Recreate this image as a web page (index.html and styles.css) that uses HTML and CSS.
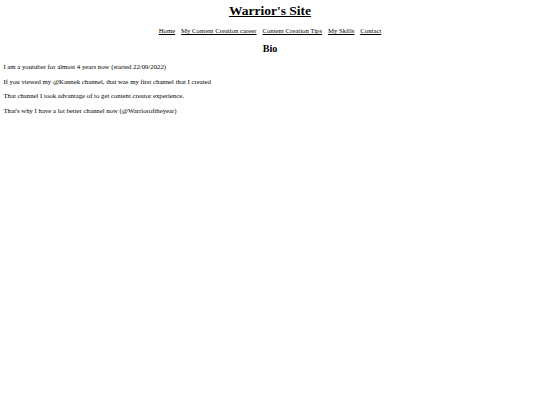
FILE: index.html
```html
<!DOCTYPE html>
<html>
<head>
<meta charset="utf-8">
<title>Warrior's Site</title>
<link rel="stylesheet" href="styles.css">
</head>
<body>
<header class="site-header">
  <h1 class="title"><u>Warrior's Site</u></h1>
  <nav class="nav">
    <a href="#">Home</a>
    <a href="#">My Content Creation career</a>
    <a href="#">Content Creation Tips</a>
    <a href="#">My Skills</a>
    <a href="#">Contact</a>
  </nav>
</header>
<main>
  <h2 class="section-title">Bio</h2>
  <p>I am a youtuber for almost 4 years now (started 22/09/2022)</p>
  <p>If you viewed my @Kannek channel, that was my first channel that I created</p>
  <p>That channel I took advantage of to get content creator experience.</p>
  <p>That's why I have a lot better channel now (@Warrioroftheyear)</p>
</main>
</body>
</html>
```

FILE: styles.css
```css
body {
  margin: 3.4px;
  font-family: "Liberation Serif", "Times New Roman", serif;
  font-size: 6.75px;
  line-height: 7.8px;
  color: #000;
  background: #fff;
}
.site-header {
  text-align: center;
}
.title {
  margin: 0 0 8.2px;
  font-size: 13.5px;
  line-height: 15.5px;
}
.nav a {
  color: #000;
  text-decoration: underline;
  margin: 0 2.1px;
}
.section-title {
  text-align: center;
  font-size: 10.1px;
  line-height: 11.6px;
  margin: 8.3px 0;
}
p {
  margin: 6.7px 0;
}
```
